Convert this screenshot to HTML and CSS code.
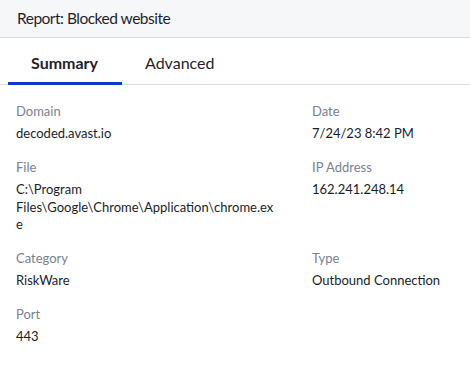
FILE: index.html
```html
<!DOCTYPE html>
<html lang="en">
<head>
<meta charset="utf-8">
<title>Report: Blocked website</title>
<link rel="stylesheet" href="styles.css">
</head>
<body>
<div class="dialog">
  <header class="header">
    <h1 class="title">Report: Blocked website</h1>
  </header>
  <nav class="tabs">
    <div class="tab active">Summary</div>
    <div class="tab">Advanced</div>
  </nav>
  <section class="details">
    <div class="field">
      <div class="label">Domain</div>
      <div class="value">decoded.avast.io</div>
    </div>
    <div class="field">
      <div class="label">Date</div>
      <div class="value">7/24/23 8:42 PM</div>
    </div>
    <div class="field">
      <div class="label">File</div>
      <div class="value path">C:\Program Files\Google\Chrome\Application\chrome.exe</div>
    </div>
    <div class="field">
      <div class="label">IP Address</div>
      <div class="value">162.241.248.14</div>
    </div>
    <div class="field">
      <div class="label">Category</div>
      <div class="value">RiskWare</div>
    </div>
    <div class="field">
      <div class="label">Type</div>
      <div class="value">Outbound Connection</div>
    </div>
    <div class="field">
      <div class="label">Port</div>
      <div class="value">443</div>
    </div>
  </section>
</div>
</body>
</html>
```

FILE: styles.css
```css
* { box-sizing: border-box; }
html, body {
  margin: 0;
  padding: 0;
  background: #ffffff;
}
body {
  font-family: Lato, "Open Sans", sans-serif;
  color: #1c1e29;
  width: 470px;
  height: 386px;
  overflow: hidden;
}
.header {
  height: 38px;
  background: #f6f7f9;
  border-bottom: 1px solid #d9d9e2;
  display: flex;
  align-items: center;
  padding-left: 17px;
}
.title {
  margin: 0;
  font-size: 15.5px;
  font-weight: 400;
  letter-spacing: -0.5px;
  line-height: 20px;
  color: #1d1f2c;
  padding-bottom: 2px;
}
.tabs {
  display: flex;
  padding-left: 8px;
  border-bottom: 1px solid #dcdce4;
  height: 47px;
}
.tab {
  display: flex;
  align-items: center;
  padding: 4px 24px 0 23px;
  font-size: 16px;
  color: #1d1f2c;
  border-bottom: 3px solid transparent;
  margin-bottom: -1px;
}
.tab.active {
  font-weight: 700;
  border-bottom-color: #1139cc;
}
.details {
  display: grid;
  grid-template-columns: 261px 1fr;
  column-gap: 35px;
  row-gap: 15.5px;
  padding: 17px 16px 0;
}
.field {
  display: flex;
  flex-direction: column;
  gap: 5px;
}
.label {
  font-size: 13px;
  line-height: 18px;
  color: #7b7f8e;
}
.value {
  font-size: 13px;
  line-height: 17.5px;
  color: #1b1d28;
}
.path {
  overflow-wrap: anywhere;
}
```
